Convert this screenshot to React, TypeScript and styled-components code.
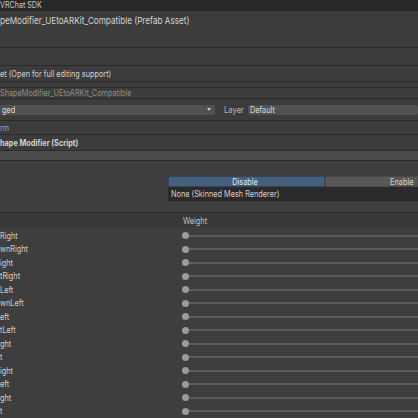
import React from "react";
import styled, { createGlobalStyle } from "styled-components";

const Global = createGlobalStyle`
  html, body { margin: 0; padding: 0; background: #3e3e3e; }
  body { font-family: Inter, "Noto Sans", sans-serif; font-size: 8.6px; color: #d2d2d2; }
  * { box-sizing: border-box; }
`;

const Page = styled.div`
  width: 418px;
  height: 418px;
  overflow: hidden;
  display: flex;
  flex-direction: column;
  background: #3e3e3e;
`;

/* Unity captures are horizontally condensed: narrow the glyphs, keep their height */
const Txt = styled.span<{ $origin?: "left" | "center" | "right" }>`
  display: inline-block;
  white-space: nowrap;
  transform: scaleX(0.85);
  transform-origin: ${(p) => p.$origin ?? "left"} center;
`;

const TopBar = styled.div`
  height: 11px;
  background: #282828;
  display: flex;
  align-items: center;
  color: #c8c8c8;
  font-size: 8.4px;
`;

const Header = styled.div`
  height: 37px;
  background: #3c3c3c;
  border-bottom: 1px solid #2b2b2b;
  padding-top: 4px;
  color: #d4d4d4;
  font-size: 9.6px;
`;

const Band = styled.div<{ $h: number; $bg?: string; $color?: string; $bold?: boolean }>`
  height: ${(p) => p.$h}px;
  background: ${(p) => p.$bg ?? "#3c3c3c"};
  border-bottom: 1px solid #2b2b2b;
  display: flex;
  align-items: center;
  color: ${(p) => p.$color ?? "#d2d2d2"};
  font-weight: ${(p) => (p.$bold ? 700 : 400)};
  white-space: nowrap;
`;

const TagRow = styled.div`
  height: 22px;
  border-bottom: 1px solid #2b2b2b;
  display: flex;
  align-items: center;
  background: #3c3c3c;
`;

const Dropdown = styled.div<{ $w?: number }>`
  height: 10px;
  ${(p) => (p.$w ? `width: ${p.$w}px;` : "flex: 1;")}
  background: #515151;
  border-radius: 2px;
  display: flex;
  align-items: center;
  justify-content: space-between;
  padding: 0 4px 0 2px;
  color: #dcdcdc;
`;

const Arrow = styled.span`
  width: 0;
  height: 0;
  border-left: 2.5px solid transparent;
  border-right: 2.5px solid transparent;
  border-top: 3px solid #c8c8c8;
`;

const Label = styled.span<{ $ml?: number }>`
  margin-left: ${(p) => p.$ml ?? 0}px;
  width: 24px;
  color: #b8b8b8;
  font-size: 9px;
`;

const Body = styled.div`
  display: flex;
  flex-direction: column;
  padding-top: 15px;
`;

const ButtonRow = styled.div`
  display: flex;
  margin-left: 168px;
  height: 11px;
`;

const ToggleButton = styled.div<{ $active?: boolean; $align: "center" | "right" }>`
  flex: ${(p) => (p.$active ? "0 0 157px" : "1")};
  background: ${(p) => (p.$active ? "#46607c" : "#585858")};
  border: 1px solid ${(p) => (p.$active ? "#2f4660" : "#4a4a4a")};
  border-radius: 2px 0 0 2px;
  color: ${(p) => (p.$active ? "#e0e6ee" : "#d8d8d8")};
  display: flex;
  align-items: center;
  justify-content: ${(p) => (p.$align === "center" ? "center" : "flex-end")};
  padding-right: 4px;
`;

const ObjectField = styled.div`
  margin-left: 168px;
  height: 14px;
  background: #2a2a2a;
  display: flex;
  align-items: center;
  padding-left: 3px;
  color: #d2d2d2;
`;

const TableHeader = styled.div`
  margin-top: 11px;
  height: 15px;
  background: #383838;
  border-top: 1px solid #2a2a2a;
  display: flex;
  align-items: center;
  padding-left: 183px;
  padding-top: 1px;
  color: #c4c4c4;
`;

const Rows = styled.div`
  padding-top: 2px;
  display: flex;
  flex-direction: column;
`;

const Row = styled.div`
  height: 13.5px;
  display: flex;
  align-items: center;
`;

const RowLabel = styled.span`
  width: 182px;
  color: #d0d0d0;
  white-space: nowrap;
`;

const Track = styled.div`
  flex: 1;
  height: 2px;
  background: #5c5c5c;
  position: relative;
`;

const Knob = styled.div`
  position: absolute;
  left: 0;
  top: -2.5px;
  width: 7px;
  height: 7px;
  border-radius: 50%;
  background: #9b9b9b;
`;

const labels = [
  "Right",
  "wnRight",
  "ight",
  "tRight",
  "Left",
  "wnLeft",
  "eft",
  "tLeft",
  "ght",
  "t",
  "ight",
  "eft",
  "ght",
  "t",
];

export default function App() {
  return (
    <Page>
      <Global />
      <TopBar>
        <Txt>VRChat SDK</Txt>
      </TopBar>
      <Header>
        <Txt>peModifier_UEtoARKit_Compatible (Prefab Asset)</Txt>
      </Header>
      <Band $h={18} />
      <Band $h={17}>
        <Txt>et (Open for full editing support)</Txt>
      </Band>
      <Band $h={6} />
      <Band $h={11} $color="#8c8c8c">
        <Txt>ShapeModifier_UEtoARKit_Compatible</Txt>
      </Band>
      <TagRow>
        <Dropdown $w={215}>
          <Txt>ged</Txt>
          <Arrow />
        </Dropdown>
        <Label $ml={9}>
          <Txt>Layer</Txt>
        </Label>
        <Dropdown>
          <Txt>Default</Txt>
        </Dropdown>
      </TagRow>
      <Band $h={14} $color="#7aa4dc">
        <Txt>rm</Txt>
      </Band>
      <Band $h={16} $bold>
        <Txt>hape Modifier (Script)</Txt>
      </Band>
      <Band $h={10} $bg="#4b4b4b" />
      <Body>
        <ButtonRow>
          <ToggleButton $active $align="center">
            <Txt $origin="center">Disable</Txt>
          </ToggleButton>
          <ToggleButton $align="right">
            <Txt $origin="right">Enable</Txt>
          </ToggleButton>
        </ButtonRow>
        <ObjectField>
          <Txt>None (Skinned Mesh Renderer)</Txt>
        </ObjectField>
        <TableHeader>
          <Txt>Weight</Txt>
        </TableHeader>
        <Rows>
          {labels.map((l, i) => (
            <Row key={i}>
              <RowLabel>
                <Txt>{l}</Txt>
              </RowLabel>
              <Track>
                <Knob />
              </Track>
            </Row>
          ))}
        </Rows>
      </Body>
    </Page>
  );
}
